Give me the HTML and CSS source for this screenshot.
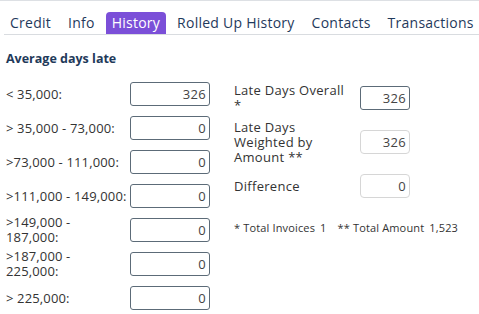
FILE: index.html
```html
<!DOCTYPE html>
<html lang="en">
<head>
  <meta charset="UTF-8">
  <meta name="viewport" content="width=device-width, initial-scale=1.0">
  <title>History</title>
  <link rel="stylesheet" href="styles.css">
</head>
<body>
  <div class="tabs">
    <a class="tab">Credit</a>
    <a class="tab">Info</a>
    <a class="tab active">History</a>
    <a class="tab">Rolled Up History</a>
    <a class="tab">Contacts</a>
    <a class="tab">Transactions</a>
  </div>
  <div class="panel">
    <h2 class="section-title">Average days late</h2>
    <div class="columns">
      <div class="buckets">
        <label class="bucket-label">&lt; 35,000:</label>
        <input class="field" type="text" value="326">
        <label class="bucket-label">&gt; 35,000 - 73,000:</label>
        <input class="field" type="text" value="0">
        <label class="bucket-label">&gt;73,000 - 111,000:</label>
        <input class="field" type="text" value="0">
        <label class="bucket-label">&gt;111,000 - 149,000:</label>
        <input class="field" type="text" value="0">
        <label class="bucket-label wrap">&gt;149,000 - 187,000:</label>
        <input class="field" type="text" value="0">
        <label class="bucket-label wrap">&gt;187,000 - 225,000:</label>
        <input class="field" type="text" value="0">
        <label class="bucket-label">&gt; 225,000:</label>
        <input class="field" type="text" value="0">
      </div>
      <div class="summary">
        <div class="summary-grid">
          <label class="summary-label">Late Days Overall *</label>
          <input class="field small" type="text" value="326">
          <label class="summary-label">Late Days Weighted by Amount **</label>
          <input class="field small readonly" type="text" value="326" readonly>
          <label class="summary-label">Difference</label>
          <input class="field small readonly" type="text" value="0" readonly>
        </div>
        <p class="totals">
          <span class="total">* Total Invoices <span class="total-value">1</span></span>
          <span class="total">** Total Amount <span class="total-value">1,523</span></span>
        </p>
      </div>
    </div>
  </div>
</body>
</html>
```

FILE: styles.css
```css
body {
  margin: 0;
  font-family: 'Open Sans', 'Noto Sans', sans-serif;
  color: #333;
  background: #fff;
  border-top: 1px solid #dde0e4;
}
.tabs {
  display: flex;
  gap: 5px;
  margin: 10px 0 0 4px;
  padding-top: 1px;
  border-bottom: 1px solid #d9dce0;
}
.tab {
  flex-shrink: 0;
  padding: 2px 6px 2px;
  font-size: 14px;
  line-height: 18px;
  letter-spacing: 0.25px;
  white-space: nowrap;
  color: #1f3a5c;
  border-radius: 4px 4px 0 0;
}
.tab.active {
  background: #7b4fd8;
  color: #fff;
}
.panel {
  padding: 0 6px;
}
.section-title {
  margin: 15px 0 9px;
  font-size: 12.5px;
  line-height: 18px;
  font-weight: bold;
  color: #1f3a5a;
}
.columns {
  display: flex;
  gap: 24px;
}
.buckets {
  display: grid;
  grid-template-columns: 124px 80px;
  grid-auto-rows: 34px;
  align-items: center;
}
.bucket-label, .summary-label {
  font-size: 13px;
  line-height: 15px;
  letter-spacing: 0.3px;
  color: #333;
}
.bucket-label {
  letter-spacing: 0.15px;
  white-space: nowrap;
}
.bucket-label.wrap {
  max-width: 90px;
  white-space: normal;
}
.summary-label {
  padding-right: 8px;
}
.field {
  box-sizing: border-box;
  width: 80px;
  height: 24px;
  padding: 0 3px;
  border: 1px solid #5c6b78;
  border-radius: 3px;
  font-family: inherit;
  font-size: 13px;
  letter-spacing: 0.3px;
  color: #444;
  text-align: right;
}
.field.small {
  width: 50px;
}
.field.readonly {
  border-color: #d6d6d6;
  border-radius: 4px;
}
.summary-grid {
  display: grid;
  grid-template-columns: 126px 50px;
  grid-auto-rows: 44px;
  align-items: center;
  margin-top: -1px;
}
.totals {
  display: flex;
  gap: 11px;
  margin: 12px 0 0;
  font-size: 11px;
  line-height: 15px;
  letter-spacing: 0.15px;
  color: #333;
}
.total-value {
  margin-left: 2px;
}
```
